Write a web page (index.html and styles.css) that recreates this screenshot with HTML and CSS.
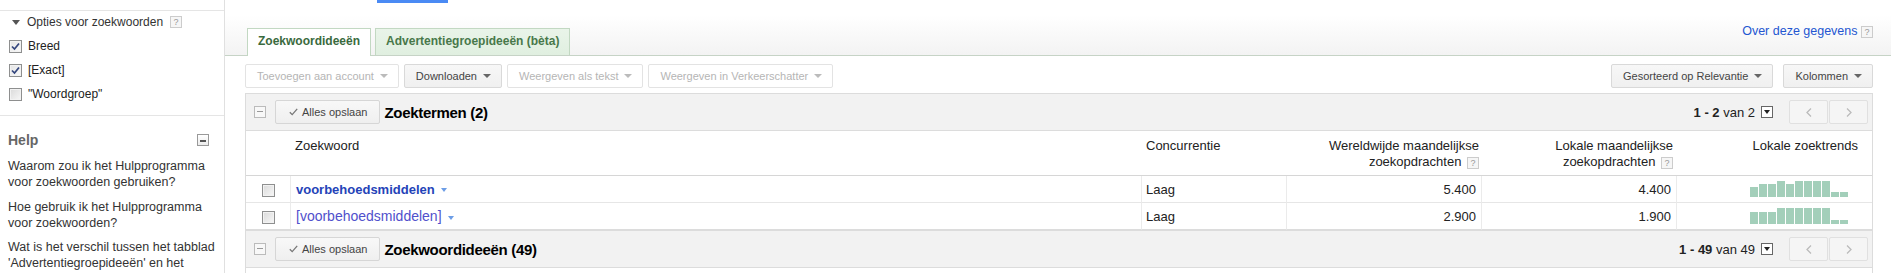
FILE: index.html
```html
<!DOCTYPE html>
<html>
<head>
    <meta charset="utf-8">
    <title>Hulpprogramma voor zoekwoorden</title>
    <link rel="stylesheet" href="styles.css">
</head>
<body>
<div class="page">
    <div class="sidebar">
        <div class="side-top"></div>
        <div class="options">
            <div class="options-title"><span class="tri-down"></span>Opties voor zoekwoorden <span class="q">?</span></div>
            <div class="option"><span class="cb checked"><svg width="11" height="11" viewBox="0 0 11 11"><path d="M2 5.5 L4.5 8 L9 2.5" fill="none" stroke="#34467e" stroke-width="1.7"/></svg></span>Breed</div>
            <div class="option"><span class="cb checked"><svg width="11" height="11" viewBox="0 0 11 11"><path d="M2 5.5 L4.5 8 L9 2.5" fill="none" stroke="#34467e" stroke-width="1.7"/></svg></span>[Exact]</div>
            <div class="option"><span class="cb"></span>"Woordgroep"</div>
        </div>
        <div class="help">
            <div class="help-title"><span>Help</span><span class="minus dark"></span></div>
            <p>Waarom zou ik het Hulpprogramma voor zoekwoorden gebruiken?</p>
            <p>Hoe gebruik ik het Hulpprogramma voor zoekwoorden?</p>
            <p>Wat is het verschil tussen het tabblad 'Advertentiegroepideeën' en het tabblad 'Zoekwoordideeën'?</p>
        </div>
    </div>

    <div class="main">
        <div class="top">
            <div class="blue-btn"></div>
            <div class="tabbar">
                <div class="tab active">Zoekwoordideeën</div>
                <div class="tab">Advertentiegroepideeën (bèta)</div>
                <a class="about">Over deze gegevens <span class="q">?</span></a>
            </div>
        </div>

        <div class="toolbar">
            <div class="btn disabled">Toevoegen aan account<span class="arrow"></span></div>
            <div class="btn">Downloaden<span class="arrow"></span></div>
            <div class="btn disabled">Weergeven als tekst<span class="arrow"></span></div>
            <div class="btn disabled">Weergeven in Verkeerschatter<span class="arrow"></span></div>
            <div class="btn push">Gesorteerd op Relevantie<span class="arrow"></span></div>
            <div class="btn wide-gap">Kolommen<span class="arrow"></span></div>
        </div>

        <div class="results">
            <div class="section-head">
                <span class="minus"></span>
                <div class="save-btn"><svg width="9" height="8" viewBox="0 0 9 8"><path d="M0.8 4.2 L3.2 6.6 L8.2 0.8" fill="none" stroke="#777" stroke-width="1.3"/></svg>Alles opslaan</div>
                <div class="section-title">Zoektermen (2)</div>
                <div class="pager">
                    <span class="range"><b>1 - 2</b> van 2</span>
                    <span class="pick"></span>
                    <div class="nav"><svg width="6" height="9" viewBox="0 0 6 9"><path d="M5 0.5 L1 4.5 L5 8.5" fill="none" stroke="#bbb" stroke-width="1.3"/></svg></div>
                    <div class="nav"><svg width="6" height="9" viewBox="0 0 6 9"><path d="M1 0.5 L5 4.5 L1 8.5" fill="none" stroke="#bbb" stroke-width="1.3"/></svg></div>
                </div>
            </div>

            <table class="grid">
                <colgroup>
                    <col class="c-check">
                    <col>
                    <col class="c-comp">
                    <col class="c-num">
                    <col class="c-num">
                    <col class="c-num">
                </colgroup>
                <tr class="head">
                    <th></th>
                    <th class="left">Zoekwoord</th>
                    <th class="left">Concurrentie</th>
                    <th class="right">Wereldwijde maandelijkse<br>zoekopdrachten <span class="q">?</span></th>
                    <th class="right r4">Lokale maandelijkse<br>zoekopdrachten <span class="q">?</span></th>
                    <th class="right trend-head">Lokale zoektrends</th>
                </tr>
                <tr class="row">
                    <td class="check"><span class="cb"></span></td>
                    <td class="kw"><a class="kw-link strong">voorbehoedsmiddelen</a><span class="kw-arrow"></span></td>
                    <td>Laag</td>
                    <td class="num">5.400</td>
                    <td class="num">4.400</td>
                    <td class="trend">
                        <div class="bars">
                            <span style="height:10px"></span><span style="height:13px"></span><span style="height:13px"></span><span style="height:16px"></span><span style="height:13px"></span><span style="height:16px"></span><span style="height:16px"></span><span style="height:16px"></span><span style="height:16px"></span><span style="height:5px"></span><span style="height:5px"></span>
                        </div>
                    </td>
                </tr>
                <tr class="row last">
                    <td class="check"><span class="cb"></span></td>
                    <td class="kw"><a class="kw-link">[voorbehoedsmiddelen]</a><span class="kw-arrow"></span></td>
                    <td>Laag</td>
                    <td class="num">2.900</td>
                    <td class="num">1.900</td>
                    <td class="trend">
                        <div class="bars">
                            <span style="height:12px"></span><span style="height:12px"></span><span style="height:12px"></span><span style="height:16px"></span><span style="height:16px"></span><span style="height:16px"></span><span style="height:16px"></span><span style="height:16px"></span><span style="height:16px"></span><span style="height:4px"></span><span style="height:4px"></span>
                        </div>
                    </td>
                </tr>
            </table>

            <div class="section-head">
                <span class="minus"></span>
                <div class="save-btn"><svg width="9" height="8" viewBox="0 0 9 8"><path d="M0.8 4.2 L3.2 6.6 L8.2 0.8" fill="none" stroke="#777" stroke-width="1.3"/></svg>Alles opslaan</div>
                <div class="section-title">Zoekwoordideeën (49)</div>
                <div class="pager">
                    <span class="range"><b>1 - 49</b> van 49</span>
                    <span class="pick"></span>
                    <div class="nav"><svg width="6" height="9" viewBox="0 0 6 9"><path d="M5 0.5 L1 4.5 L5 8.5" fill="none" stroke="#bbb" stroke-width="1.3"/></svg></div>
                    <div class="nav"><svg width="6" height="9" viewBox="0 0 6 9"><path d="M1 0.5 L5 4.5 L1 8.5" fill="none" stroke="#bbb" stroke-width="1.3"/></svg></div>
                </div>
            </div>
        </div>
    </div>
</div>
</body>
</html>
```

FILE: styles.css
```css
* {
    box-sizing: border-box;
}

html,
body {
    margin: 0;
    padding: 0;
}

body {
    font-family: "Liberation Sans", Arial, sans-serif;
    font-size: 13px;
    color: #222;
    background: #fff;
    overflow: hidden;
}

.page {
    display: flex;
    height: 273px;
    overflow: hidden;
}

/* sidebar */

.sidebar {
    width: 225px;
    flex: none;
    border-right: 1px solid #e0e0e0;
}

.side-top {
    height: 11px;
    border-bottom: 1px solid #e5e5e5;
}

.options {
    height: 105px;
    border-bottom: 1px solid #e5e5e5;
    padding: 3px 0 0 9px;
    font-size: 12px;
}

.options-title {
    display: flex;
    align-items: center;
    height: 16px;
    margin-bottom: 4px;
    color: #333;
}

.tri-down {
    width: 0;
    height: 0;
    border-top: 5px solid #555;
    border-left: 4px solid transparent;
    border-right: 4px solid transparent;
    margin: 0 7px 0 3px;
}

.options-title .q {
    margin-left: 7px;
}

.option {
    display: flex;
    align-items: center;
    height: 24px;
    color: #222;
}

.option .cb {
    margin-right: 6px;
}

.cb {
    display: inline-flex;
    align-items: center;
    justify-content: center;
    width: 13px;
    height: 13px;
    border: 1px solid #8e8f8f;
    background: linear-gradient(135deg, #dadada, #f7f7f7);
    box-shadow: inset 0 0 0 1px #f2f2f2;
    vertical-align: middle;
}

.cb.checked {
    background: linear-gradient(135deg, #e4e4e4, #fafafa);
}

.q {
    display: inline-block;
    width: 12px;
    height: 12px;
    border: 1px solid #ccc;
    background: #f6f6f6;
    color: #999;
    font-size: 9px;
    line-height: 10px;
    text-align: center;
    vertical-align: middle;
    letter-spacing: 0;
}

.help {
    padding: 15px 4px 0 8px;
}

.help-title {
    display: flex;
    justify-content: space-between;
    align-items: center;
    height: 18px;
    margin-bottom: 9px;
    padding-right: 11px;
    font-size: 14px;
    font-weight: bold;
    color: #666;
}

.help p {
    margin: 0 0 8.5px;
    font-size: 12.5px;
    line-height: 16px;
    color: #333;
}

.minus {
    position: relative;
    display: inline-block;
    width: 12px;
    height: 12px;
    border: 1px solid #bbb;
    background: #f8f8f8;
    flex: none;
}

.minus::after {
    content: "";
    position: absolute;
    left: 2px;
    right: 2px;
    top: 4px;
    height: 1px;
    background: #999;
}

.minus.dark {
    border-color: #999;
    background: linear-gradient(#fff, #ececec);
}

.minus.dark::after {
    top: 5px;
    height: 2px;
    background: #555;
}

/* main area */

.main {
    flex: 1;
    min-width: 0;
}

.top {
    height: 56px;
    padding: 0 18px 0 22px;
    border-bottom: 1px solid #c6d3c6;
    background: linear-gradient(#fff 0, #fff 15px, #f3f3f3 55px);
}

.blue-btn {
    width: 71px;
    height: 3px;
    margin-left: 130px;
    background: #4a8af4;
}

.tabbar {
    display: flex;
    align-items: flex-end;
    margin-top: 25px;
}

.tab {
    height: 27px;
    padding: 0 10px;
    margin-right: 4px;
    border: 1px solid #c2d8c2;
    border-bottom: none;
    background: linear-gradient(#e9f4e9, #e0efe0);
    color: #48784a;
    font-size: 12px;
    font-weight: bold;
    line-height: 25px;
}

.tab.active {
    height: 28px;
    margin-bottom: -1px;
    background: #fff;
    color: #3a6a3e;
}

.about {
    align-self: flex-start;
    margin: -5px 0 0 auto;
    font-size: 12.5px;
    line-height: 16px;
    color: #2356d1;
}

.toolbar {
    display: flex;
    gap: 5px;
    height: 24px;
    margin: 8px 18px 0 20px;
}

.btn {
    display: flex;
    align-items: center;
    height: 24px;
    padding: 0 10px 0 11px;
    border: 1px solid #d9d9d9;
    border-radius: 2px;
    background: linear-gradient(#f7f7f7, #f0f0f0);
    color: #444;
    font-size: 11px;
    white-space: nowrap;
}

.btn.disabled {
    border-color: #e3e3e3;
    background: #fff;
    color: #b5b5b5;
}

.btn.push {
    margin-left: auto;
}

.btn.wide-gap {
    margin-left: 5px;
}

.arrow {
    width: 0;
    height: 0;
    margin-left: 6px;
    border-top: 4px solid #666;
    border-left: 4px solid transparent;
    border-right: 4px solid transparent;
}

.btn.disabled .arrow {
    border-top-color: #bbb;
}

/* results */

.results {
    height: 190px;
    margin: 5px 18px 0 20px;
    border-left: 1px solid #dcdcdc;
    border-right: 1px solid #dcdcdc;
}

.section-head {
    display: flex;
    align-items: center;
    height: 38px;
    padding: 0 4px 0 8px;
    border-top: 1px solid #dcdcdc;
    border-bottom: 1px solid #dcdcdc;
    background: #f2f2f2;
}

.save-btn {
    display: flex;
    align-items: center;
    gap: 4px;
    height: 24px;
    margin-left: 9px;
    padding: 0 12px 0 13px;
    border: 1px solid #d6d6d6;
    border-radius: 2px;
    background: linear-gradient(#f8f8f8, #efefef);
    color: #444;
    font-size: 11px;
}

.section-title {
    margin-left: 4px;
    color: #000;
    font-size: 15px;
    font-weight: bold;
    letter-spacing: -0.3px;
}

.pager {
    display: flex;
    align-items: center;
    margin-left: auto;
}

.range b {
    font-weight: bold;
}

.pick {
    position: relative;
    width: 12px;
    height: 12px;
    margin: 0 15px 0 6px;
    border: 1px solid #666;
    background: #fff;
}

.pick::after {
    content: "";
    position: absolute;
    left: 2px;
    top: 3px;
    border-top: 4px solid #222;
    border-left: 3px solid transparent;
    border-right: 3px solid transparent;
}

.nav {
    display: flex;
    align-items: center;
    justify-content: center;
    width: 39px;
    height: 24px;
    margin-left: 1px;
    border: 1px solid #e0e0e0;
    border-radius: 2px;
    background: #f5f5f5;
}

.grid {
    width: 100%;
    table-layout: fixed;
    border-collapse: separate;
    border-spacing: 0;
}

.c-check {
    width: 45px;
}

.c-comp {
    width: 145px;
}

.c-num {
    width: 195px;
}

.grid th {
    height: 45px;
    padding: 7px 3px 0 4px;
    border-bottom: 1px solid #d6d6d6;
    vertical-align: top;
    font-weight: normal;
    line-height: 16px;
    color: #222;
}

.grid th.left {
    text-align: left;
}

.grid th.right {
    text-align: right;
}

.grid th.r4 {
    padding-right: 4px;
}

.grid th.trend-head {
    padding-right: 14px;
}

.grid th .q {
    margin-left: 2px;
}

.grid td {
    height: 27px;
    padding: 0 5px 0 4px;
    border-right: 1px solid #ebebeb;
    border-bottom: 1px solid #e6e6e6;
    vertical-align: middle;
    white-space: nowrap;
}

.grid td:last-child {
    border-right: none;
}

.grid .last td {
    border-bottom-color: #dcdcdc;
}

.grid td.check {
    padding: 0;
    text-align: center;
}

.grid td.kw {
    padding-left: 5px;
}

.grid td.num {
    text-align: right;
}

.kw-link {
    color: #5050cc;
    font-size: 14px;
}

.kw-link.strong {
    color: #2443b8;
    font-size: 13px;
    font-weight: bold;
}

.kw-arrow {
    display: inline-block;
    margin-left: 6px;
    vertical-align: middle;
    border-top: 4px solid #6c9de6;
    border-left: 3.5px solid transparent;
    border-right: 3.5px solid transparent;
}

.grid td.trend {
    padding-right: 24px;
}

.bars {
    display: flex;
    align-items: flex-end;
    justify-content: flex-end;
    gap: 1px;
    height: 16px;
}

.bars span {
    width: 8px;
    background: #a3cfba;
}
```
